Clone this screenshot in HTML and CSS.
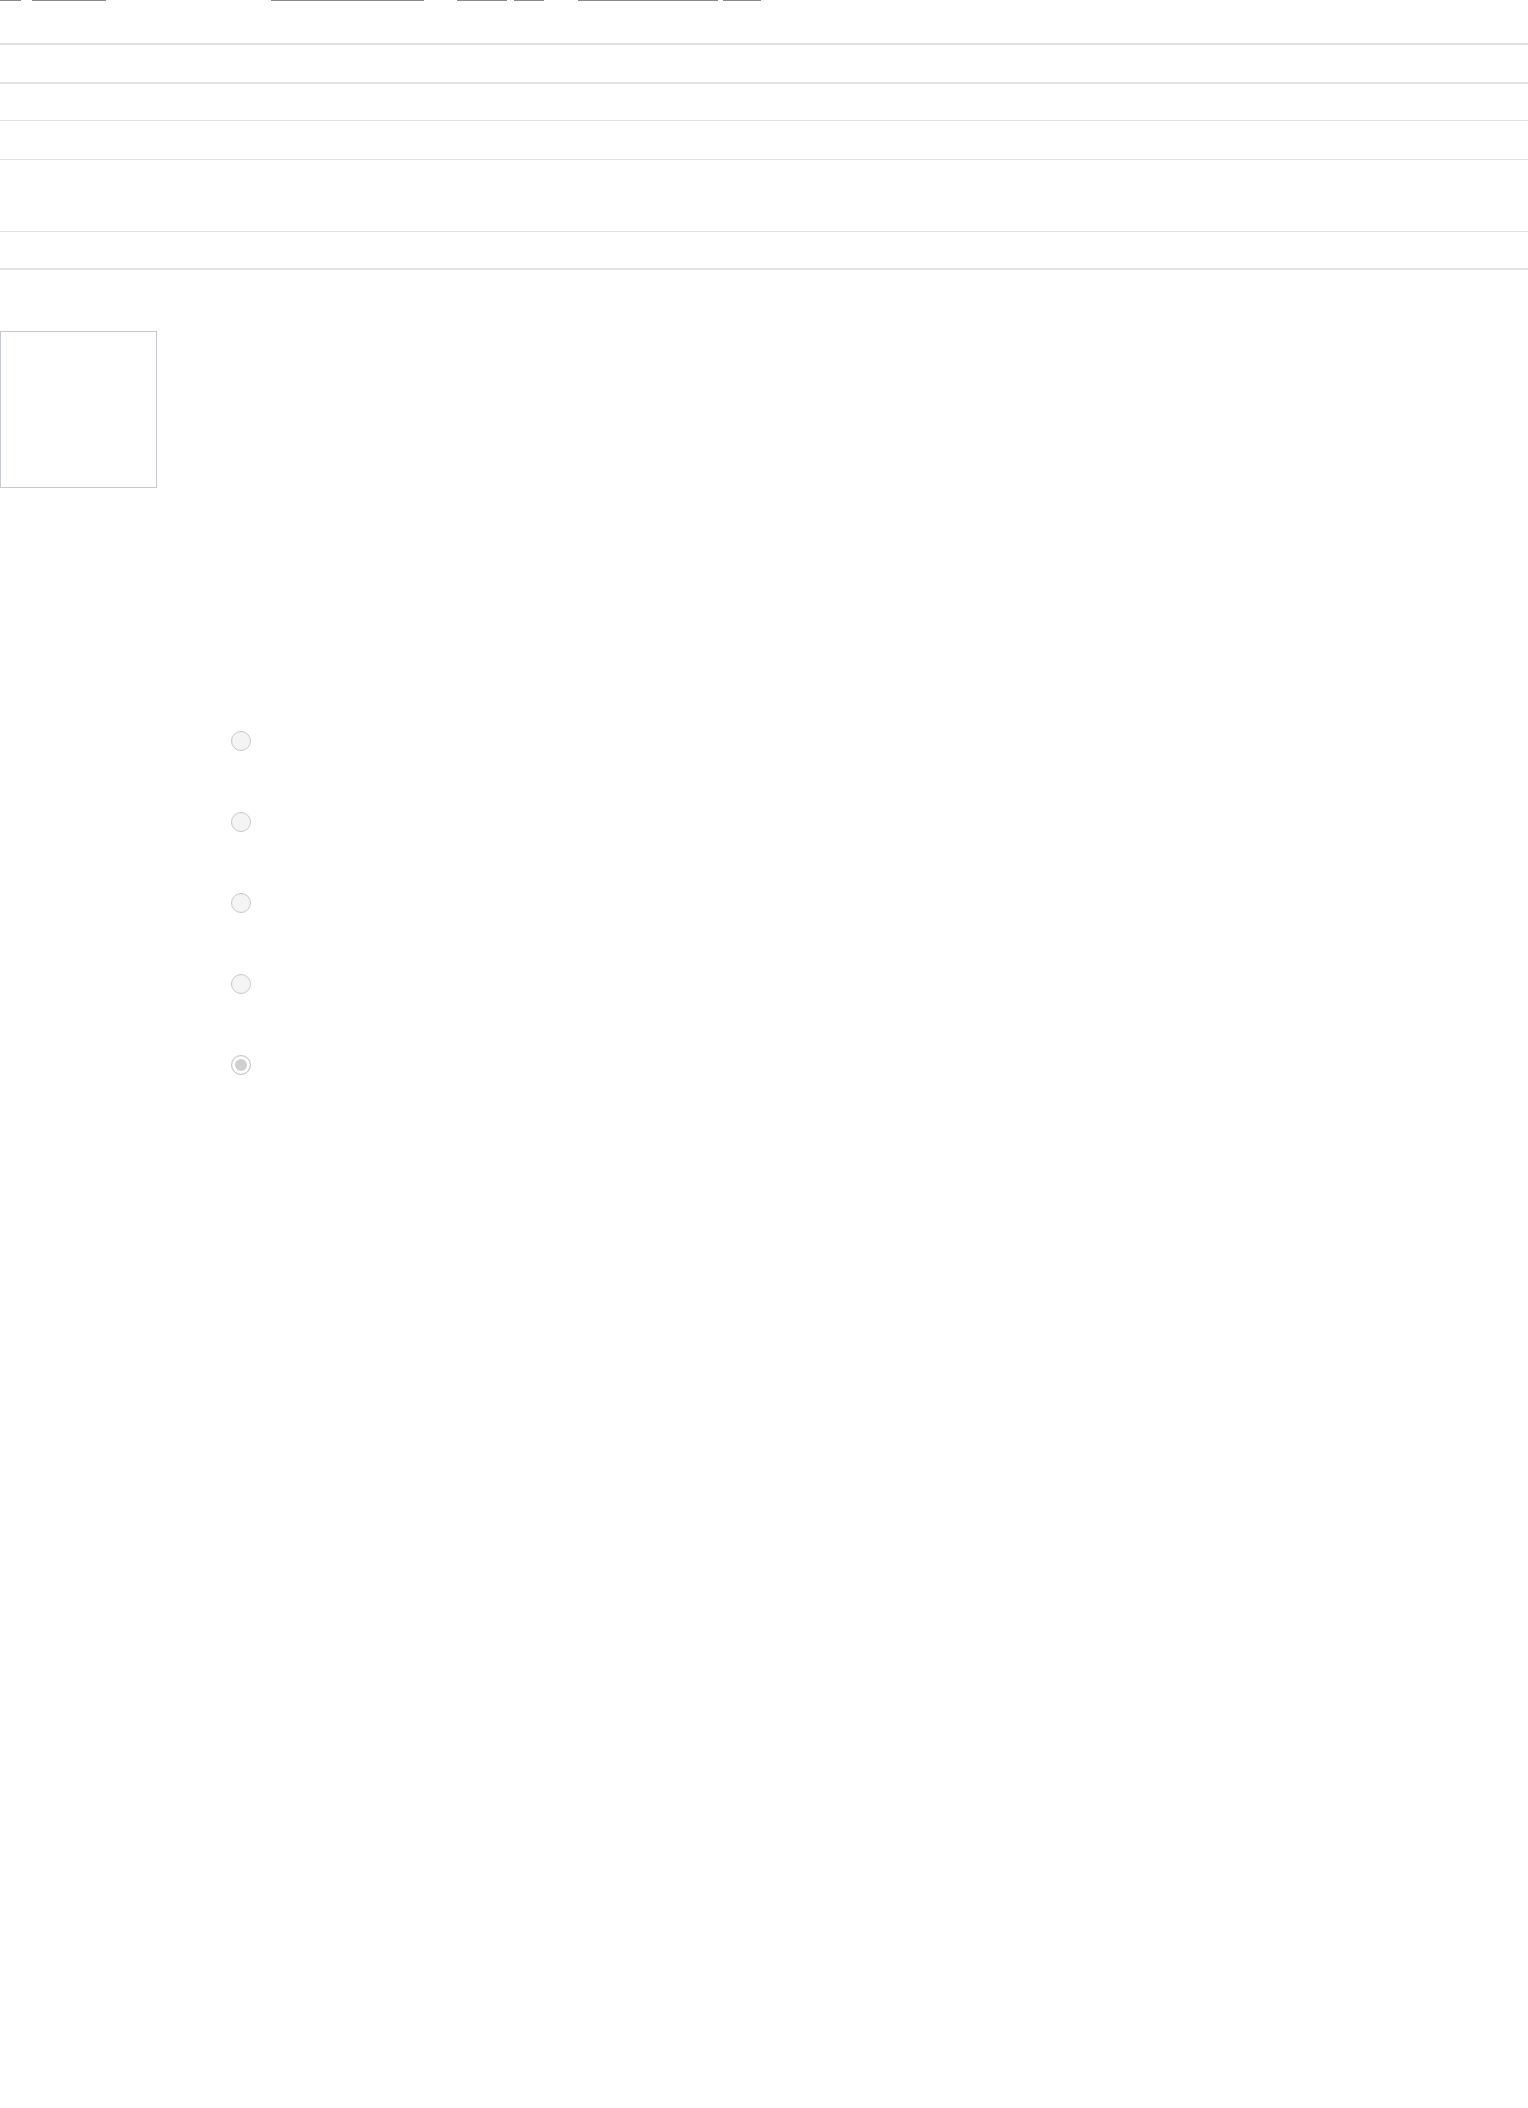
FILE: index.html
```html
<!DOCTYPE html>
<html lang="en">
<head>
<meta charset="utf-8">
<title>Page</title>
<link rel="stylesheet" href="styles.css">
</head>
<body>
  <nav class="toplinks">
    <a class="link l1" href="#"></a>
    <a class="link l2" href="#"></a>
    <a class="link l3" href="#"></a>
    <a class="link l4" href="#"></a>
    <a class="link l5" href="#"></a>
    <a class="link l6" href="#"></a>
    <a class="link l7" href="#"></a>
  </nav>
  <div class="table">
    <div class="row r1"></div>
    <div class="row r2"></div>
    <div class="row r3"></div>
    <div class="row r4"></div>
    <div class="row r5"></div>
  </div>
  <div class="thumb"></div>
  <form class="options">
    <input class="radio" type="radio" name="opt" disabled>
    <input class="radio" type="radio" name="opt" disabled>
    <input class="radio" type="radio" name="opt" disabled>
    <input class="radio" type="radio" name="opt" disabled>
    <input class="radio" type="radio" name="opt" checked disabled>
  </form>
</body>
</html>
```

FILE: styles.css
```css
html, body {
  margin: 0;
  padding: 0;
  background: #ffffff;
  font-family: "Liberation Sans", Arial, sans-serif;
}

.toplinks {
  display: flex;
  height: 1px;
}

.link {
  display: block;
  height: 1px;
  background: #8a8a8a;
}
.l1 { margin-left: 0; width: 21px; }
.l2 { margin-left: 11px; width: 74px; }
.l3 { margin-left: 165px; width: 153px; }
.l4 { margin-left: 33px; width: 50px; }
.l5 { margin-left: 7px; width: 30px; }
.l6 { margin-left: 34px; width: 140px; }
.l7 { margin-left: 5px; width: 38px; }

.table {
  margin-top: 42px;
  border-top: 2px solid #dee2e6;
}

.row { border-bottom: 1px solid #e2e2e2; }
.r1 { height: 37px; border-bottom: 2px solid #dee2e6; }
.r2 { height: 36px; }
.r3 { height: 38px; }
.r4 { height: 71px; }
.r5 { height: 36px; border-bottom: 2px solid #dee2e6; }

.thumb {
  margin-top: 61px;
  width: 157px;
  height: 157px;
  box-sizing: border-box;
  border: 1px solid #c4cad0;
}

.options {
  margin: 243px 0 0 231px;
  display: flex;
  flex-direction: column;
  gap: 61px;
  align-items: flex-start;
}

.radio {
  appearance: none;
  -webkit-appearance: none;
  margin: 0;
  width: 20px;
  height: 20px;
  box-sizing: border-box;
  border-radius: 50%;
  border: 1.5px solid #c8c8c8;
  background: #f4f4f4;
}

.radio:checked {
  background: #cfcfcf;
  box-shadow: inset 0 0 0 3px #ffffff;
}
```
